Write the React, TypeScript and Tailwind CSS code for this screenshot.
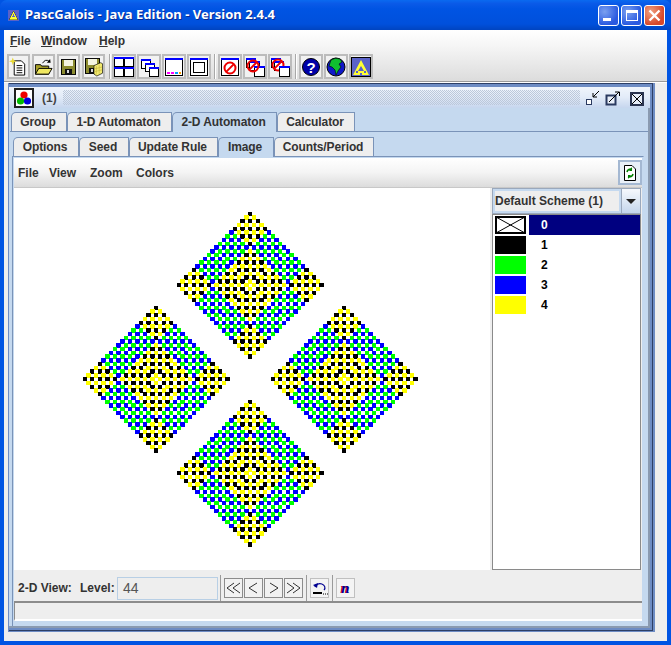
import React from "react";

const COLORS = ["", "#000000", "#00ff00", "#0000ff", "#ffff00"];

// coefficients of (x + 1/x + y + 1/y)^44 mod 5
const computeCells = () => {
  const n = 44;
  const size = 2 * n + 3;
  let grid = Array.from({ length: size }, () => new Array(size).fill(0));
  grid[n + 1][n + 1] = 1;
  for (let s = 0; s < n; s++) {
    const next = Array.from({ length: size }, () => new Array(size).fill(0));
    for (let r = 1; r < size - 1; r++) {
      for (let c = 1; c < size - 1; c++) {
        next[r][c] =
          (grid[r - 1][c] + grid[r + 1][c] + grid[r][c - 1] + grid[r][c + 1]) % 5;
      }
    }
    grid = next;
  }
  const cells: { x: number; y: number; w: number; h: number; v: number }[] = [];
  for (let r = 0; r < size; r++) {
    for (let c = 0; c < size; c++) {
      if (grid[r][c]) {
        const fx = 234.5 + (c - n - 1) * 3.76;
        const fy = 189.5 + (r - n - 1) * 3.76;
        cells.push({
          x: Math.floor(fx),
          y: Math.floor(fy),
          w: Math.floor(fx + 4.4) - Math.floor(fx),
          h: Math.floor(fy + 4.4) - Math.floor(fy),
          v: grid[r][c],
        });
      }
    }
  }
  return cells;
};

const cells = computeCells();

const Automaton = () => (
  <svg width="476" height="382" viewBox="0 0 476 382" shapeRendering="crispEdges" className="block">
    {cells.map((c, i) => (
      <rect key={i} x={c.x} y={c.y} width={c.w} height={c.h} fill={COLORS[c.v]} />
    ))}
  </svg>
);

const Tri = ({ size = 20 }: { size?: number }) => (
  <svg width={size} height={size} viewBox="0 0 20 20" shapeRendering="crispEdges">
    <rect width="20" height="20" fill="#5a62c8" />
    <path d="M10 2 L18 18 H2 Z" fill="#ffff33" stroke="#000" strokeWidth="0.6" />
    <path d="M10 8 L13 13 H7 Z" fill="#5a62c8" />
  </svg>
);

const Win = ({ x, y, w, h }: { x: number; y: number; w: number; h: number }) => (
  <g shapeRendering="crispEdges">
    <rect x={x + 0.5} y={y + 0.5} width={w - 1} height={h - 1} fill="#fff" stroke="#000" />
    <rect x={x} y={y} width={w} height="2" fill="#0000ff" />
  </g>
);

const No = ({ cx, cy, r }: { cx: number; cy: number; r: number }) => (
  <g fill="none" stroke="#ee0000" strokeWidth="2">
    <circle cx={cx} cy={cy} r={r} />
    <path d={`M${cx - r * 0.7} ${cy + r * 0.7} L${cx + r * 0.7} ${cy - r * 0.7}`} />
  </g>
);

const Ico = ({ children }: { children: React.ReactNode }) => (
  <svg width="20" height="20" viewBox="0 0 20 20">
    {children}
  </svg>
);

const Floppy = ({ w = 16 }: { w?: number }) => (
  <g shapeRendering="crispEdges">
    <rect x="2.5" y="2.5" width={w - 1} height="15" fill="#8c8c30" stroke="#000" />
    <rect x="5" y="3" width={w - 6} height="6" fill="#f4f4e0" />
    <rect x="6" y="12" width={w - 8} height="5" fill="#111" />
    <rect x="8" y="13" width="2" height="3" fill="#ddd" />
  </g>
);

const toolIcons = [
  <Ico key="new">
    <path d="M5.5 3.5 H13 L16.5 7 V18.5 H5.5 Z" fill="#fff" stroke="#000" />
    <path d="M8 8.5 H14 M8 11 H14 M8 13.5 H14 M8 16 H14" stroke="#000" />
    <path d="M4 0 L5 3 L8 4 L5 5 L4 8 L3 5 L0 4 L3 3 Z" fill="#e8d830" />
  </Ico>,
  <Ico key="open">
    <path d="M1.5 7.5 H7 L8 9 H15.5 V17.5 H1.5 Z" fill="#a8a028" stroke="#000" />
    <path d="M1.5 17.5 L5 11.5 H19 L15.5 17.5 Z" fill="#f0e860" stroke="#000" />
    <path d="M9 6 Q12 1 16 4" fill="none" stroke="#000" />
    <path d="M17.5 5.5 L13.5 5.5 L17 1.5 Z" fill="#000" />
  </Ico>,
  <Ico key="save">
    <Floppy />
  </Ico>,
  <Ico key="saveas">
    <g transform="translate(-1 -1)">
      <Floppy />
    </g>
    <path d="M10.5 8.5 L17.5 5.5 L19.5 6.5 V16.5 L13.5 19.5 L10.5 17.5 Z" fill="#f2ea70" stroke="#000" strokeWidth="0.7" />
    <path d="M13 9 V18 M16 8 V17 M11 12 L19 10 M11 15 L19 13" stroke="#c8b840" strokeWidth="0.7" />
  </Ico>,
  <Ico key="tile">
    <Win x={0} y={0} w={10} h={10} />
    <Win x={10} y={0} w={10} h={10} />
    <Win x={0} y={10} w={10} h={10} />
    <Win x={10} y={10} w={10} h={10} />
  </Ico>,
  <Ico key="cascade">
    <Win x={2} y={2} w={10} h={10} />
    <Win x={6} y={6} w={10} h={9} />
    <Win x={10} y={10} w={10} h={10} />
  </Ico>,
  <Ico key="min">
    <Win x={1} y={1} w={18} h={18} />
    <g shapeRendering="crispEdges">
      <rect x="3" y="15" width="3" height="2" fill="#ff00ff" />
      <rect x="7" y="15" width="3" height="2" fill="#ff00ff" />
      <rect x="11" y="15" width="3" height="2" fill="#00a0ff" />
      <rect x="15" y="15" width="2" height="2" fill="#ffa000" />
    </g>
  </Ico>,
  <Ico key="frame">
    <Win x={1} y={1} w={18} h={18} />
    <rect x="4.5" y="5.5" width="11" height="10" fill="#fff" stroke="#000" shapeRendering="crispEdges" />
  </Ico>,
  <Ico key="no">
    <Win x={1} y={1} w={18} h={18} />
    <No cx={10} cy={11} r={5.5} />
  </Ico>,
  <Ico key="no2">
    <Win x={1} y={1} w={10} h={10} />
    <Win x={4} y={4} w={11} h={10} />
    <Win x={9} y={9} w={11} h={11} />
    <No cx={8} cy={9} r={5.5} />
  </Ico>,
  <Ico key="no3">
    <Win x={1} y={1} w={10} h={10} />
    <Win x={4} y={4} w={10} h={10} />
    <No cx={8} cy={8} r={5.5} />
    <Win x={9} y={9} w={11} h={11} />
  </Ico>,
  <Ico key="help">
    <circle cx="10" cy="10" r="8.5" fill="#0000a8" stroke="#000" />
    <text x="10" y="15.5" textAnchor="middle" fontSize="15" fontWeight="700" fill="#fff" fontFamily="Liberation Sans">
      ?
    </text>
  </Ico>,
  <Ico key="globe">
    <circle cx="10" cy="10" r="9" fill="#1018c8" stroke="#000" />
    <path d="M5 3 Q9 0 14 2 L16 5 L13 7 L15 10 L12 14 L10 18 L9 13 L6 10 L3 9 Z" fill="#10c030" stroke="#000" strokeWidth="0.6" />
  </Ico>,
  <Ico key="tri">
    <rect x="0.5" y="0.5" width="19" height="19" fill="#5a62c8" stroke="#000" />
    <path d="M10 3 L18 18 H2 Z" fill="#ffff33" />
    <path d="M10 9 L13 14 H7 Z" fill="#5a62c8" />
    <path d="M5 14 H7 V16 H5 Z M13 14 H15 V16 H13 Z M9 16 H11 V18 H9 Z" fill="#5a62c8" />
  </Ico>,
];

const Sep = ({ className = "" }: { className?: string }) => (
  <div className={`w-[2px] bg-[#a8a8a8] border-r border-white ${className}`} />
);

const ToolBtn = ({ children, w = "w-[24px]" }: { children: React.ReactNode; w?: string }) => (
  <div className={`${w} h-[25px] flex items-center justify-center border-2 border-[#bcbcbc] bg-[#f2f2f2] shrink-0`}>
    {children}
  </div>
);

const Toolbar = () => (
  <div className="h-[29px] pl-[3px] flex items-start pt-[2px]">
    <div className="flex gap-[2px]">
      {toolIcons.slice(0, 4).map((ic, i) => (
        <ToolBtn key={i} w="w-[23px]">{ic}</ToolBtn>
      ))}
    </div>
    <Sep className="h-[25px] ml-[4px] mr-[1px]" />
    <div className="flex gap-[1px]">
      {toolIcons.slice(4, 8).map((ic, i) => (
        <ToolBtn key={i}>{ic}</ToolBtn>
      ))}
    </div>
    <Sep className="h-[25px] ml-[3px] mr-[2px]" />
    <div className="flex gap-[1px]">
      {toolIcons.slice(8, 11).map((ic, i) => (
        <ToolBtn key={i}>{ic}</ToolBtn>
      ))}
    </div>
    <Sep className="h-[25px] ml-[3px] mr-[2px]" />
    <div className="flex gap-[1px]">
      {toolIcons.slice(11).map((ic, i) => (
        <ToolBtn key={i}>{ic}</ToolBtn>
      ))}
    </div>
  </div>
);

const WinBtn = ({ children, close }: { children: React.ReactNode; close?: boolean }) => (
  <div
    className={`w-[21px] h-[21px] rounded-[3px] border border-white flex items-center justify-center ${
      close
        ? "bg-[radial-gradient(circle_at_30%_30%,#f0a080,#d8482a_70%)]"
        : "bg-[radial-gradient(circle_at_30%_30%,#7aa0f0,#2a5ae0_70%)]"
    }`}
  >
    {children}
  </div>
);

const TitleBar = () => (
  <div className="h-[30px] shrink-0 flex items-center pl-[8px] pr-[6px] bg-[linear-gradient(#0a6af0_0%,#0a5ae8_12%,#0054e3_30%,#0050dc_80%,#0044c0_100%)] rounded-t-[7px]">
    <Tri size={11} />
    <span className="ml-[6px] text-white font-bold text-[13px] tracking-[0.04px] font-['Noto_Sans',sans-serif] [text-shadow:1px_1px_0_#0a2a90]">
      PascGalois - Java Edition - Version 2.4.4
    </span>
    <div className="ml-auto flex gap-[2px]">
      <WinBtn>
        <div className="w-[8px] h-[3px] bg-white mt-[8px] mr-[4px]" />
      </WinBtn>
      <WinBtn>
        <div className="w-[12px] h-[11px] border border-white border-t-[3px]" />
      </WinBtn>
      <WinBtn close>
        <svg width="13" height="13" viewBox="0 0 13 13">
          <path d="M1.5 1.5 L11.5 11.5 M11.5 1.5 L1.5 11.5" stroke="#fff" strokeWidth="2.4" />
        </svg>
      </WinBtn>
    </div>
  </div>
);

const MenuItem = ({ first, rest, w }: { first: string; rest: string; w: string }) => (
  <span className={`${w} text-[12px] font-bold text-[#333]`}>
    <span className="underline">{first}</span>
    {rest}
  </span>
);

const Tab = ({ label, w, active }: { label: string; w: string; active?: boolean }) => (
  <div
    className={`${w} flex items-center justify-center pr-[2px] text-[12px] tracking-[-0.1px] font-bold text-[#333] border border-[#7a93b8] border-b-0 rounded-tl-[5px] ${
      active ? "bg-[#c5d9ef] h-[20px] pb-[1px] -mb-[1px] relative z-10" : "bg-[#eeeeee] h-[19px]"
    }`}
  >
    {label}
  </div>
);

const FrameHeader = () => (
  <div className="h-[21px] shrink-0 flex items-center bg-[linear-gradient(#f0f5fc,#e2ebf8_50%,#c6d6ee)] pl-[5px]">
    <div className="w-[20px] h-[20px] bg-white border-2 border-[#202020] flex items-center justify-center shrink-0">
      <svg width="16" height="16" viewBox="0 0 16 16">
        <circle cx="8" cy="5" r="3.6" fill="#ee0000" />
        <circle cx="4.5" cy="11" r="3.6" fill="#00bb00" />
        <circle cx="11.5" cy="11" r="3.6" fill="#0000dd" />
      </svg>
    </div>
    <span className="ml-[8px] text-[12px] font-bold text-[#444] w-[21px]">(1)</span>
    <div className="w-[517px] h-[15px] bg-[conic-gradient(#bcc8da_25%,transparent_0_50%,#bcc8da_0_75%,transparent_0)] bg-[length:2px_2px]" />
    <svg width="16" height="16" viewBox="0 0 16 16" className="ml-[5px] mt-[1px]">
      <rect x="1.5" y="9.5" width="5" height="5" fill="#fff" stroke="#2a3a60" />
      <path d="M14 1 L8 7 M8 3 V7 H12" stroke="#000" fill="none" />
    </svg>
    <svg width="16" height="16" viewBox="0 0 16 16" className="ml-[4px] mt-[2px]">
      <rect x="1.5" y="4.5" width="9" height="9" fill="#e8eef8" stroke="#2a3a60" strokeWidth="2" />
      <path d="M4 11 L14 1 M10 1 H14.5 V5" stroke="#000" fill="none" />
    </svg>
    <div className="ml-[9px] mt-[2px] w-[14px] h-[14px] border-2 border-[#2a3450] flex items-center justify-center bg-[#e6edf8]">
      <svg width="10" height="10" viewBox="0 0 10 10">
        <path d="M0 0 L10 10 M10 0 L0 10" stroke="#000" />
      </svg>
    </div>
  </div>
);

const SubToolbar = () => (
  <div className="h-[30px] shrink-0 flex items-center border-b border-[#c8c8c8] bg-[linear-gradient(#ffffff,#f4f4f4_50%,#dcdcdc)] pl-[4px] text-[12px] font-bold text-[#333]">
    <span className="w-[31px]">File</span>
    <span className="w-[41px]">View</span>
    <span className="w-[46px]">Zoom</span>
    <span>Colors</span>
    <div className="ml-auto w-[24px] h-[25px] border-2 border-[#a4b8d2] bg-[#e9f0f8] flex items-center justify-center">
      <svg width="14" height="18" viewBox="0 0 14 18">
        <path d="M1.5 1.5 H9 L12.5 5 V16.5 H1.5 Z" fill="#fff" stroke="#000" />
        <path d="M4 8 A3.5 3.5 0 0 1 9 5.5 M10 10 A3.5 3.5 0 0 1 5 12.5" stroke="#008000" strokeWidth="1.6" fill="none" />
        <path d="M9 3 V7 H6 Z M5 15 V11 H8 Z" fill="#008000" />
      </svg>
    </div>
  </div>
);

const schemes = [
  { n: "1", bg: "bg-[#000000]" },
  { n: "2", bg: "bg-[#00ff00]" },
  { n: "3", bg: "bg-[#0000ff]" },
  { n: "4", bg: "bg-[#ffff00]" },
];

const SchemePanel = () => (
  <div className="w-[149px] shrink-0 flex flex-col ml-[2px]">
    <div className="h-[26px] shrink-0 flex border border-[#9aa8bc] bg-[#eeeeee]">
      <div className="flex-1 flex items-center border-2 border-[#c5d9ef] text-[12px] font-bold text-[#333]">
        Default Scheme (1)
      </div>
      <div className="w-[19px] flex items-center justify-center bg-[linear-gradient(#f6f9fd,#c4d6ec)] border-l border-[#9aa8bc]">
        <div className="w-0 h-0 border-x-[5px] border-x-transparent border-t-[5px] border-t-[#222]" />
      </div>
    </div>
    <div className="flex-1 bg-white border border-[#8a8a8a] pl-[2px] flex flex-col">
      <div className="h-[20px] flex items-start">
        <svg width="31" height="18" viewBox="0 0 31 18" shapeRendering="crispEdges" className="mt-[1px]">
          <rect x="1" y="1" width="29" height="16" fill="#fff" stroke="#000" strokeWidth="2" />
          <path d="M1 1 L30 17 M30 1 L1 17" stroke="#000" shapeRendering="auto" />
        </svg>
        <div className="ml-[3px] flex-1 h-[20px] bg-[#000080] text-white text-[12px] font-bold flex items-center pl-[12px]">0</div>
      </div>
      {schemes.map((s) => (
        <div key={s.n} className="h-[20px] flex items-start">
          <div className={`w-[31px] h-[18px] mt-[1px] shrink-0 ${s.bg}`} />
          <span className="ml-[15px] leading-[20px] text-[12px] font-bold text-black">{s.n}</span>
        </div>
      ))}
    </div>
  </div>
);

const StepBtn = ({ children }: { children: React.ReactNode }) => (
  <div className="w-[19px] h-[20px] border border-[#8c8c8c] flex items-center justify-center bg-[#f2f2f2] shrink-0">
    <svg width="15" height="12" viewBox="0 0 15 12" fill="none" stroke="#000" strokeWidth="0.8">
      {children}
    </svg>
  </div>
);

const BottomBar = () => (
  <div className="h-[31px] shrink-0 flex items-center pt-[5px] bg-[#eeeeee] pl-[4px] text-[12px] font-bold text-[#333]">
    <span className="w-[62px]">2-D View:</span>
    <span className="w-[37px]">Level:</span>
    <div className="w-[101px] h-[23px] border border-[#b8cfe5] pl-[5px] flex items-center font-normal text-[14px] text-[#555]">44</div>
    <div className="w-px h-[26px] bg-[#9a9a9a] ml-[2px] mr-[3px]" />
    <div className="flex gap-px">
      <StepBtn><path d="M8 1 L1 6 L8 11 M14 1 L7 6 L14 11" /></StepBtn>
      <StepBtn><path d="M11 1 L3 6 L11 11" /></StepBtn>
      <StepBtn><path d="M4 1 L12 6 L4 11" /></StepBtn>
      <StepBtn><path d="M1 1 L8 6 L1 11 M7 1 L14 6 L7 11" /></StepBtn>
    </div>
    <div className="w-px h-[26px] bg-[#9a9a9a] ml-[3px] mr-[3px]" />
    <div className="w-[19px] h-[20px] border border-[#c0c0c0] flex items-center justify-center bg-[#f4f4f4]">
      <svg width="16" height="16" viewBox="0 0 16 16" fill="none">
        <path d="M3 7 A5 4 0 1 1 12 10" stroke="#000090" strokeWidth="1.2" />
        <path d="M1 5 L6 3 L5 8 Z" fill="#000090" />
        <path d="M1 13 H10" stroke="#000" strokeWidth="2" />
        <path d="M11 14 H12 M13 14 H14 M15 14 H16" stroke="#000" />
      </svg>
    </div>
    <div className="w-px h-[26px] bg-[#9a9a9a] ml-[3px] mr-[3px]" />
    <div className="w-[19px] h-[20px] border border-[#c0c0c0] flex items-center justify-center bg-[#f4f4f4] font-['Liberation_Serif',serif] italic text-[15px] font-bold text-[#000090] [text-shadow:-1px_0_0_#d00000]">
      n
    </div>
  </div>
);

const App = () => (
  <div className="w-[671px] h-[645px] flex flex-col bg-[#0054e3] font-['Liberation_Sans',sans-serif]">
    <TitleBar />
    <div className="flex-1 mx-[4px] mb-[4px] flex flex-col bg-[#eeeeee] min-h-0">
      <div className="h-[51px] shrink-0 bg-[linear-gradient(#ffffff,#f6f6f6_30%,#dcdcdc)]">
        <div className="h-[22px] flex items-center pl-[6px]">
          <MenuItem first="F" rest="ile" w="w-[31px]" />
          <MenuItem first="W" rest="indow" w="w-[58px]" />
          <MenuItem first="H" rest="elp" w="w-[30px]" />
        </div>
        <Toolbar />
      </div>
      <div className="h-[2px] shrink-0 bg-[#9a9a9a] border-b border-white" />
      <div className="flex-1 min-h-0 pl-[4px] pr-[12px] flex flex-col">
        <div className="h-[549px] shrink-0 bg-[#6d8cc4] pl-[1px] pr-[2px] pb-[1px] flex flex-col">
          <div className="flex-1 min-h-0 border-t border-r border-b border-[#2d3f66] pr-[2px] pb-[2px] pt-[3px] flex flex-col">
            <FrameHeader />
            <div className="flex-1 min-h-0 bg-[#c5d9ef] flex flex-col pt-[4px] pl-[1px] border-r-2 border-b-2 border-[#8a9ab0]">
              <div className="flex pl-[1px] h-[19px] shrink-0">
                <Tab label="Group" w="w-[56px]" />
                <Tab label="1-D Automaton" w="w-[105px]" />
                <Tab label="2-D Automaton" w="w-[105px]" active />
                <Tab label="Calculator" w="w-[78px]" />
              </div>
              <div className="flex-1 min-h-0 border-t border-[#7a93b8] pt-[5px] flex flex-col pl-[2px]">
                <div className="flex h-[19px] shrink-0 pl-[1px]">
                  <Tab label="Options" w="w-[66px]" />
                  <Tab label="Seed" w="w-[50px]" />
                  <Tab label="Update Rule" w="w-[89px]" />
                  <Tab label="Image" w="w-[56px]" active />
                  <Tab label="Counts/Period" w="w-[100px]" />
                </div>
                <div className="flex-1 min-h-0 border border-[#7a93b8] border-r-[#c5d9ef] border-b-0 mr-[4px] flex flex-col p-[1px] pb-[5px]">
                  <div className="flex-1 min-h-0 flex flex-col bg-[#eeeeee]">
                    <SubToolbar />
                    <div className="h-[382px] shrink-0 flex">
                      <div className="w-[476px] shrink-0 bg-white">
                        <Automaton />
                      </div>
                      <SchemePanel />
                    </div>
                    <BottomBar />
                    <div className="flex-1 border-t-2 border-l border-[#8c8c8c] border-b-2 border-b-white bg-[#eeeeee]" />
                  </div>
                </div>
              </div>
            </div>
          </div>
        </div>
      </div>
    </div>
  </div>
);

export default App;
